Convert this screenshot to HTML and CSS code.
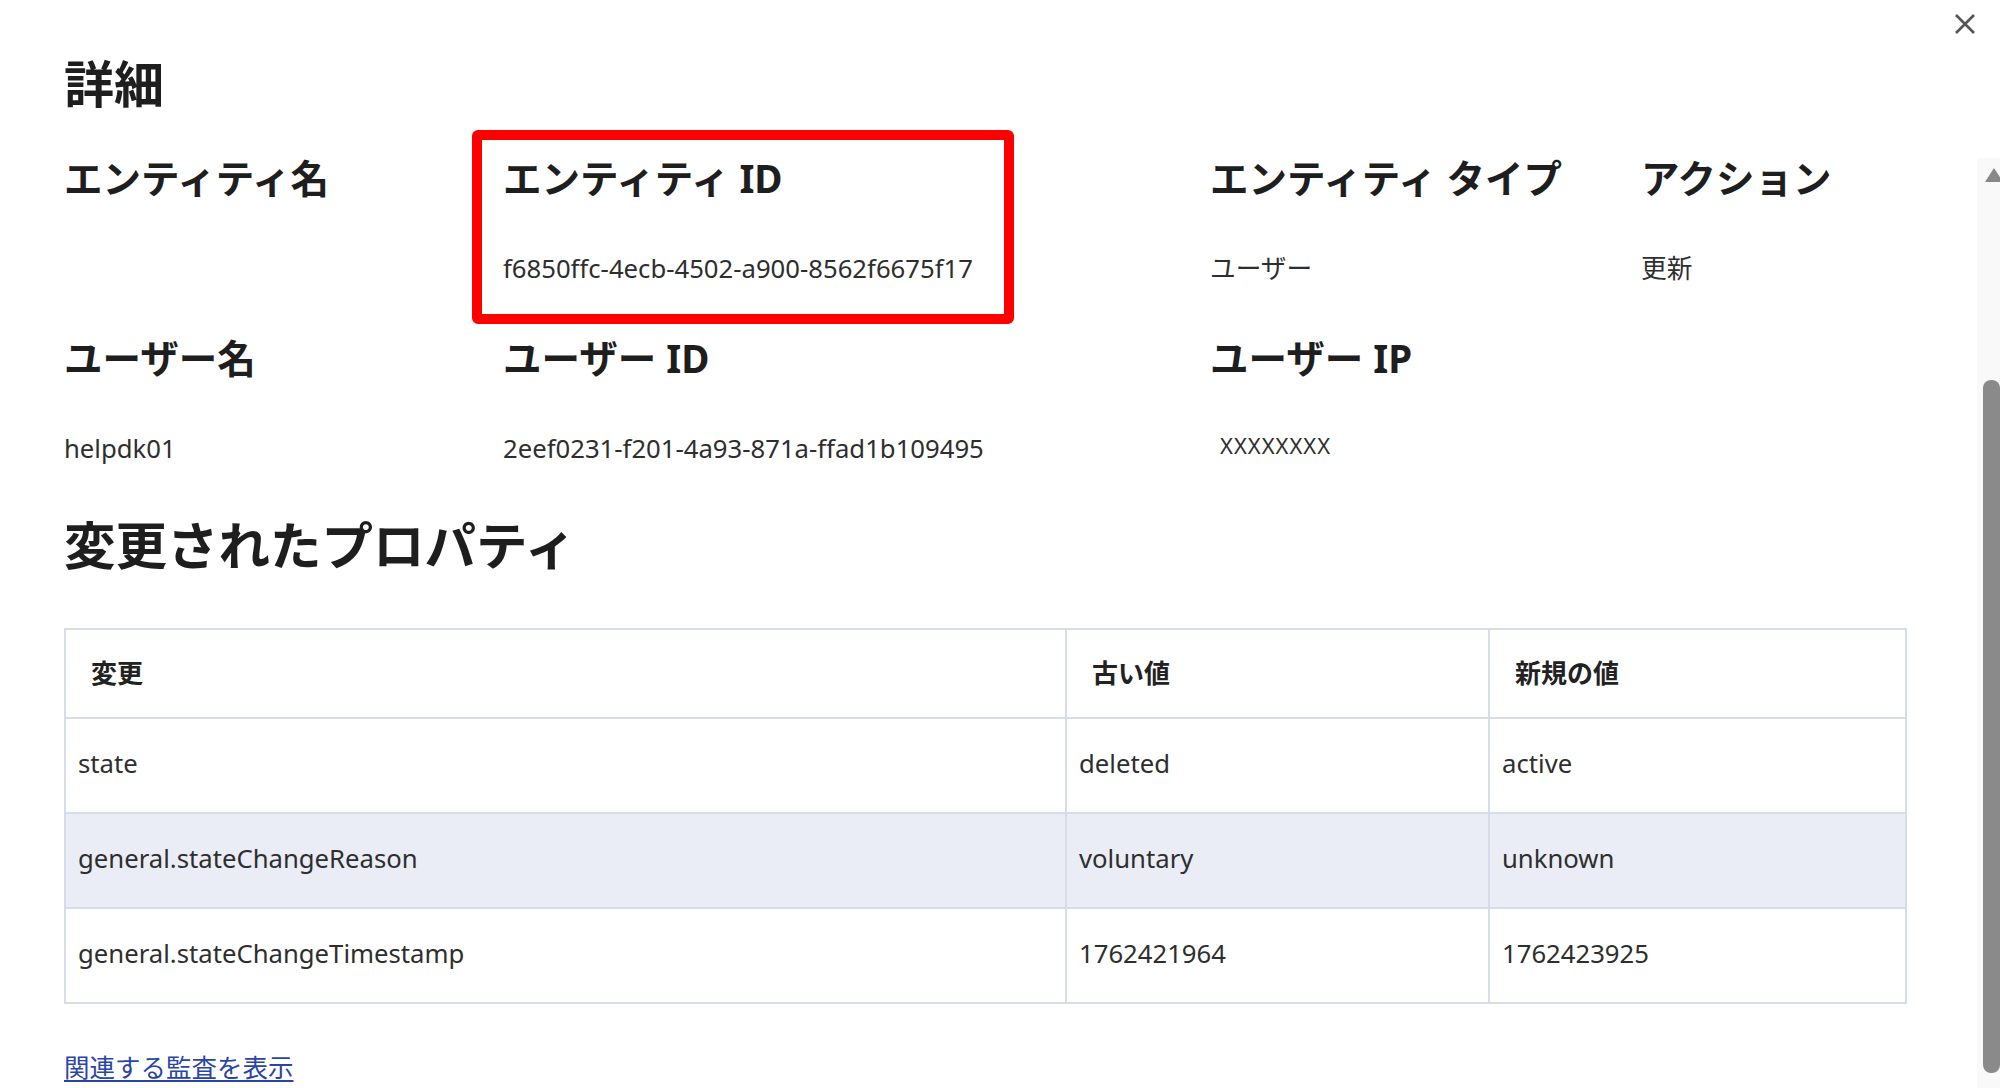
FILE: index.html
```html
<!DOCTYPE html>
<html lang="ja">

<head>
    <meta charset="utf-8" />
    <title>詳細</title>
    <link rel="stylesheet" href="styles.css">
</head>

<body>
<div class="dialog">

    <button class="close" type="button" aria-label="閉じる">
        <svg width="22" height="22" viewBox="0 0 22 22">
            <path d="M2 2 L20 20 M20 2 L2 20" stroke="#555" stroke-width="2.6" fill="none" />
        </svg>
    </button>

    <div class="content">
        <h1 class="title">詳細</h1>

        <div class="details">
            <div class="field">
                <div class="label">エンティティ名</div>
                <div class="value"></div>
            </div>
            <div class="field marked">
                <div class="label">エンティティ ID</div>
                <div class="value">f6850ffc-4ecb-4502-a900-8562f6675f17</div>
                <div class="callout"></div>
            </div>
            <div class="field">
                <div class="label">エンティティ タイプ</div>
                <div class="value">ユーザー</div>
            </div>
            <div class="field">
                <div class="label">アクション</div>
                <div class="value">更新</div>
            </div>

            <div class="field">
                <div class="label">ユーザー名</div>
                <div class="value">helpdk01</div>
            </div>
            <div class="field">
                <div class="label">ユーザー ID</div>
                <div class="value">2eef0231-f201-4a93-871a-ffad1b109495</div>
            </div>
            <div class="field">
                <div class="label">ユーザー IP</div>
                <div class="value ip">XXXXXXXX</div>
            </div>
        </div>

        <h2 class="subtitle">変更されたプロパティ</h2>

        <table class="changes">
            <thead>
                <tr>
                    <th class="col-name">変更</th>
                    <th class="col-old">古い値</th>
                    <th class="col-new">新規の値</th>
                </tr>
            </thead>
            <tbody>
                <tr>
                    <td>state</td>
                    <td>deleted</td>
                    <td>active</td>
                </tr>
                <tr class="odd">
                    <td>general.stateChangeReason</td>
                    <td>voluntary</td>
                    <td>unknown</td>
                </tr>
                <tr>
                    <td>general.stateChangeTimestamp</td>
                    <td>1762421964</td>
                    <td>1762423925</td>
                </tr>
            </tbody>
        </table>

        <a class="related" href="#">関連する監査を表示</a>
    </div>

    <!-- barre de défilement du dialogue -->
    <div class="scrollbar">
        <div class="arrow"></div>
        <div class="thumb"></div>
    </div>

</div>
</body>
</html>
```

FILE: styles.css
```css
html, body {
    margin: 0;
    padding: 0;
    background: white;
}

body {
    font-family: "Noto Sans", "Noto Sans CJK JP", sans-serif;
    color: #333;
    width: 2000px;
    height: 1088px;
    overflow: hidden;
}

div.dialog {
    position: relative;
    height: 1088px;
}

button.close {
    position: absolute;
    top: 13px;
    left: 1954px;
    width: 22px;
    height: 22px;
    padding: 0;
    border: none;
    background: none;
}

button.close svg {
    display: block;
}

div.content {
    padding: 54px 0 0 64px;
}

h1.title {
    margin: 0;
    font-size: 50px;
    line-height: 60px;
    font-weight: bold;
    color: #1e1e1e;
}

div.details {
    display: grid;
    grid-template-columns: 439px 707px 431px 300px;
    row-gap: 44px;
    margin-top: 39px;
}

div.field.marked {
    position: relative;
}

div.label {
    font-size: 38.5px;
    line-height: 50px;
    font-weight: bold;
    color: #1e1e1e;
    white-space: nowrap;
}

div.value {
    margin-top: 46px;
    font-size: 25.7px;
    line-height: 40px;
    height: 40px;
    color: #2e2e2e;
    white-space: nowrap;
}

div.value.ip {
    font-size: 22px;
    line-height: 32px;
    height: 32px;
    padding: 0 0 8px 10px;
    letter-spacing: 1px;
}

/* cadre rouge d'annotation autour de l'ID */
div.callout {
    position: absolute;
    left: -31px;
    top: -23px;
    width: 522px;
    height: 174px;
    border: 10px solid #ff0000;
    border-radius: 6px;
}

h2.subtitle {
    margin: 46px 0 0 0;
    font-size: 51.5px;
    line-height: 60px;
    font-weight: bold;
    color: #1e1e1e;
}

table.changes {
    margin-top: 53px;
    width: 1843px;
    border-collapse: collapse;
    font-size: 25.7px;
}

table.changes th,
table.changes td {
    border: 2px solid #d6dce8;
    text-align: left;
    white-space: nowrap;
}

table.changes th {
    height: 83px;
    padding: 0 0 4px 25px;
    font-size: 26px;
    font-weight: bold;
    color: #222;
}

table.changes td {
    height: 89px;
    padding: 0 0 4px 12px;
    color: #2e2e2e;
}

table.changes tbody tr + tr td {
    border-top-color: #d9dadf;
}

table.changes tr.odd td {
    background: #eaedf5;
}

th.col-name {
    width: 974px;
}

th.col-old {
    width: 396px;
}

a.related {
    display: inline-block;
    margin-top: 43px;
    font-size: 25.5px;
    line-height: 40px;
    color: #2a45a8;
    text-decoration: underline;
    text-underline-offset: 3px;
}

div.scrollbar {
    position: absolute;
    top: 158px;
    right: 0;
    bottom: 0;
    width: 23px;
    background: #f9f9f9;
}

div.scrollbar .arrow {
    margin: 10px 0 0 8px;
    width: 0;
    height: 0;
    border-left: 9px solid transparent;
    border-right: 9px solid transparent;
    border-bottom: 14px solid #888;
}

div.scrollbar .thumb {
    margin: 198px 0 0 6px;
    width: 17px;
    height: 693px;
    background: #8a8a8a;
    border-radius: 8px;
}
```
